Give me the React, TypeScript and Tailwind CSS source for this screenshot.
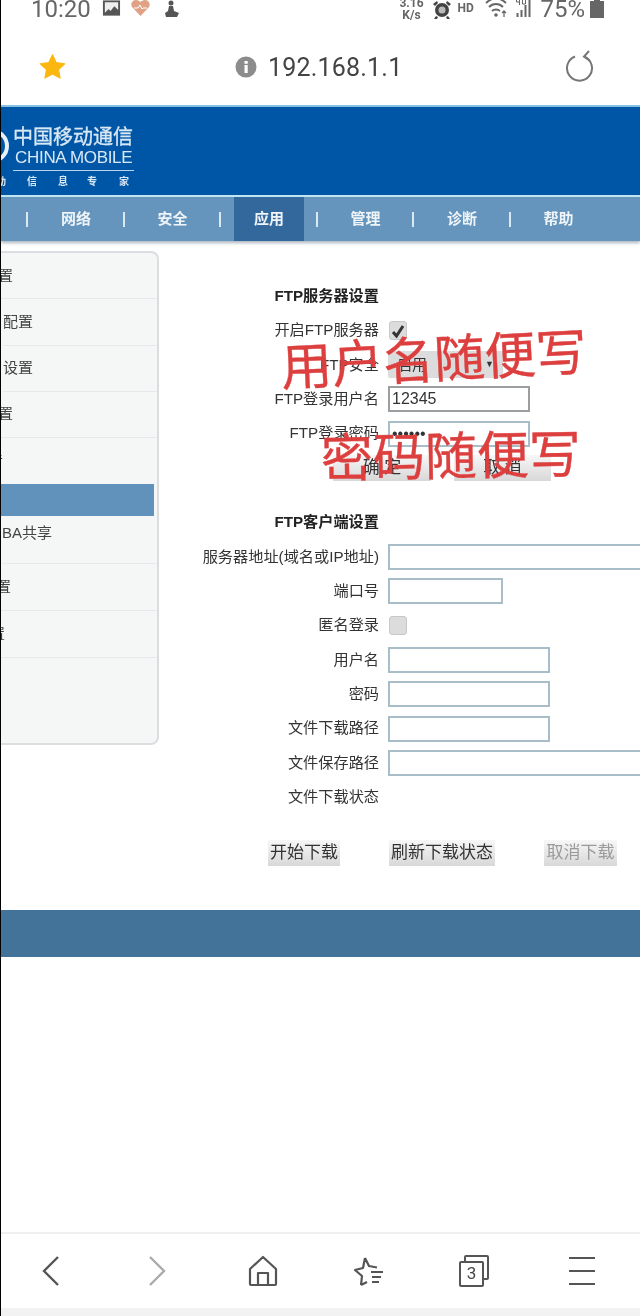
const navItems = ["网络", "安全", "应用", "管理", "诊断", "帮助"];

// only the part of each sidebar label that is still on screen
const sideRows = [
  { label: "置", cls: "h-[46px] ml-[-3px] border-b pt-[1px]" },
  { label: "配置", cls: "h-[47px] ml-[2px] border-b" },
  { label: "设置", cls: "h-[46px] ml-[2px] border-b" },
  { label: "置", cls: "h-[46px] ml-[-3px] border-b" },
  { label: "音", cls: "h-[46px] ml-[-13px]" },
];
const sideRowsBottom = [
  { label: "BA共享", cls: "h-[48px] ml-[1px] border-b pb-[12px]" },
  { label: "置", cls: "h-[47px] ml-[-5px] border-b" },
  { label: "置", cls: "h-[47px] ml-[-11px] border-b" },
];

function Row({ label, children }: { label: string; children?: React.ReactNode }) {
  return (
    <div className="flex h-[34.4px] items-center">
      <div className="w-[220px] shrink-0 whitespace-nowrap text-right text-[15.2px] text-[#333]">{label}</div>
      <div className="ml-[9px] flex items-center">{children}</div>
    </div>
  );
}

function TextBox({ w, value, type = "text", dark }: { w: string; value?: string; type?: string; dark?: boolean }) {
  return (
    <input
      readOnly
      type={type}
      defaultValue={value}
      className={`${w} h-[26px] shrink-0 border-2 ${
        dark ? "border-[#9c9fa1]" : "border-[#a9bdc9]"
      } bg-white px-[2px] text-[16px] text-[#333] outline-none`}
    />
  );
}

function Check({ checked }: { checked?: boolean }) {
  return (
    <div className="ml-[1px] flex h-[19px] w-[18px] items-center justify-center rounded-[3px] border border-[#c8c8c8] bg-[#dcdcdc]">
      {checked && (
        <svg width="14" height="14" viewBox="0 0 14 14">
          <path d="M2 8l3.500 4L12 2" fill="none" stroke="#333" strokeWidth="3" />
        </svg>
      )}
    </div>
  );
}

function Btn({ w, text, muted }: { w: string; text: string; muted?: boolean }) {
  return (
    <div
      className={`${w} flex h-[26px] items-center justify-center whitespace-nowrap bg-gradient-to-b from-[#f7f7f7] to-[#d8d8d8] text-[17px] ${
        muted ? "text-[#9a9a9a]" : "text-[#333]"
      }`}
    >
      {text}
    </div>
  );
}

function StatusBar() {
  return (
    <div className="flex h-[27px] items-start overflow-hidden pl-[30px] text-[#666]">
      <span className="mt-[-5px] font-['Roboto'] text-[24px] leading-[28px]">10:20</span>
      <svg className="ml-[11px]" width="19" height="17" viewBox="0 0 20 17">
        <path d="M1 0h18v16H1z" fill="#555" />
        <path d="M3 2h14v8l-4-4-4 5-2-2-4 4z" fill="#eee" />
      </svg>
      <svg className="ml-[10px]" width="19" height="17" viewBox="0 0 19 17">
        <path d="M9.500 16L1 7C-1 3 2 0 5 0c2 0 3.500 1 4.500 2C10.500 1 12 0 14 0c3 0 6 3 4 7z" fill="#e0a184" />
        <path d="M3 8h4l2-3 2 4 1-1h4" fill="none" stroke="#fff" strokeWidth="1" />
      </svg>
      <svg className="ml-[14px]" width="16" height="18" viewBox="0 0 16 18">
        <circle cx="7" cy="3" r="2.500" fill="#555" />
        <path d="M5 6h4l1 5 5 2-2 4H2l-1-4 3-2z" fill="#555" />
      </svg>
      <div className="ml-auto flex items-start">
        <div className="mt-[-3px] w-[24px] text-center font-['Roboto'] text-[12px] font-bold leading-[12px]">
          3.16
          <br />
          K/s
        </div>
        <svg className="ml-[9px]" width="20" height="20" viewBox="0 0 20 20">
          <circle cx="10" cy="10" r="7" fill="#444" />
          <circle cx="10" cy="10" r="3.500" fill="#bbb" />
          <path d="M1 4l4-3 1 2-3 3zM19 4l-4-3-1 2 3 3zM4 16l-2 3h3l1-2zM16 16l2 3h-3l-1-2z" fill="#444" />
        </svg>
        <span className="ml-[5px] mt-[2px] w-[17px] font-['Roboto'] text-[12px] font-bold leading-[12px]">HD</span>
        <svg className="ml-[11px] mt-[-2px]" width="24" height="20" viewBox="0 0 24 20">
          <path d="M1 5c6-6 14-6 20 0M4 9c4-4 10-4 14 0M7 13c2-2 6-2 8 0" fill="none" stroke="#666" strokeWidth="1.800" />
          <circle cx="11" cy="17" r="1.800" fill="#666" />
          <path d="M19 13v6M17 15l2-2 2 2" fill="none" stroke="#666" strokeWidth="1.300" />
        </svg>
        <svg className="ml-[6px] mt-[-3px]" width="18" height="21" viewBox="0 0 17 21">
          <path d="M1 20h2v-4H1zM5 20h2v-7H5zM9 20h2V8H9zM13 20h2V1h-2z" fill="#666" />
          <path d="M1 1v4h3M4 1v7M7 1h3v6H7z" fill="none" stroke="#666" strokeWidth="1" />
        </svg>
        <span className="ml-[7px] mt-[-5px] font-['Roboto'] text-[24px] leading-[28px]">75%</span>
        <svg className="ml-[5px] mt-[-1px]" width="14" height="19" viewBox="0 0 14 19">
          <path d="M4 0h6v2h4v17H0V2h4z" fill="#666" />
        </svg>
      </div>
      <div className="w-[36px] shrink-0" />
    </div>
  );
}

function UrlBar() {
  return (
    <div className="flex h-[78px] items-center">
      <svg className="ml-[37px] mt-[1px]" width="29" height="28" viewBox="0 0 24 24">
        <path
          d="M12 1.500l3.200 6.800 7.300.9-5.400 5 1.400 7.300L12 18l-6.500 3.500 1.400-7.300-5.400-5 7.300-.9z"
          fill="#fbb710"
          stroke="#fbb710"
          strokeLinejoin="round"
        />
      </svg>
      <svg className="ml-[168px] mt-[1px]" width="22" height="22" viewBox="0 0 22 22">
        <circle cx="11" cy="11" r="10.500" fill="#8c8c8c" />
        <rect x="9.500" y="9" width="3.200" height="8" fill="#fff" />
        <rect x="9.500" y="5" width="3.200" height="2.800" fill="#fff" />
      </svg>
      <span className="ml-[11px] mt-[3px] font-['Roboto'] text-[25px] tracking-[0.2px] text-[#444]">192.168.1.1</span>
      <svg className="ml-[163px]" width="30" height="32" viewBox="0 0 30 32">
        <path d="M10 6.500a12.500 12.500 0 1 0 9 0" fill="none" stroke="#777" strokeWidth="2" />
        <path d="M24 1l-5 5.500 5.500 4" fill="none" stroke="#777" strokeWidth="2" />
      </svg>
    </div>
  );
}

function Banner() {
  return (
    <div className="flex h-[90px] items-start border-t-2 border-[#84c4e2] bg-[#0056a6] text-[#d9e8f5]">
      <svg className="mt-[20px] shrink-0" width="8" height="38" viewBox="0 0 8 38">
        <circle cx="-9" cy="19" r="15" fill="none" stroke="#e8f0f8" strokeWidth="4" />
      </svg>
      <div className="ml-[4px] w-[121px] shrink-0">
        <div className="mt-[18px] whitespace-nowrap text-[20px] leading-[24px] [-webkit-text-stroke:0.3px_#d9e8f5]">中国移动通信</div>
        <div className="ml-[2px] mt-[-1px] whitespace-nowrap text-[17px] font-normal leading-[19px] tracking-[-0.3px]">CHINA MOBILE</div>
        <div className="mt-[3px] h-[1px] bg-[#b8d4ea]" />
      </div>
      <div className="absolute left-[1px] top-[175px] flex w-[135px] text-[10px] font-bold leading-[14px]">
        <span className="ml-[-6px]">动</span>
        <span className="ml-[21px]">信</span>
        <span className="ml-[21px]">息</span>
        <span className="ml-[19px]">专</span>
        <span className="ml-[22px]">家</span>
      </div>
    </div>
  );
}

function Nav() {
  return (
    <div className="flex h-[46px] border-t-2 border-[#bfe4f2] bg-[#6595bd] pl-[25px] shadow-[0_2px_3px_rgba(90,110,130,0.5)]">
      {navItems.map((item) => (
        <div key={item} className="flex w-[96.500px] shrink-0 items-center">
          <div className="h-[15px] w-[2px] bg-[#dbe8f1]" />
          <div
            className={`ml-[13px] flex h-full w-[70px] items-center justify-center text-[15px] font-bold text-[#eef4f8] ${
              item === "应用" ? "bg-[#33689d]" : ""
            }`}
          >
            {item}
          </div>
        </div>
      ))}
    </div>
  );
}

function Sidebar() {
  return (
    <div className="mt-[10px] h-[494px] w-[158px] shrink-0 overflow-hidden rounded-r-[8px] border-y-2 border-r-2 border-[#dcdde0] bg-[#f5f6f6] text-[15px] text-[#444]">
      {sideRows.map((r, i) => (
        <div key={i} className={`${r.cls} flex items-center border-[#e8e9ec] whitespace-nowrap`}>
          {r.label}
        </div>
      ))}
      <div className="mr-[3px] h-[32px] bg-[#6192bc]" />
      {sideRowsBottom.map((r, i) => (
        <div key={i} className={`${r.cls} flex items-center border-[#e8e9ec] whitespace-nowrap`}>
          {r.label}
        </div>
      ))}
    </div>
  );
}

function Toolbar() {
  return (
    <div className="relative flex h-[76px] items-center border-t-2 border-[#efefef]">
      <svg className="ml-[40px]" width="20" height="32" viewBox="0 0 20 32">
        <path d="M17 2L3 16l14 14" fill="none" stroke="#555" strokeWidth="2.400" />
      </svg>
      <svg className="ml-[86px]" width="20" height="32" viewBox="0 0 20 32">
        <path d="M3 2l14 14L3 30" fill="none" stroke="#aaa" strokeWidth="2.400" />
      </svg>
      <svg className="ml-[81px]" width="30" height="32" viewBox="0 0 30 32">
        <path d="M15 2L2 14v15a1 1 0 0 0 1 1h24a1 1 0 0 0 1-1V14zM10 30V18h10v12" fill="none" stroke="#555" strokeWidth="2.200" strokeLinejoin="round" />
      </svg>
      <svg className="ml-[74px]" width="32" height="32" viewBox="0 0 32 32">
        <path d="M13 3l4 8 8 1.500M9 30l1-9-7-6 8-2 2-10M9 30l6-3" fill="none" stroke="#555" strokeWidth="2.200" strokeLinejoin="round" />
        <path d="M19 17h12M20 22h9M20 27h7" stroke="#555" strokeWidth="2" />
      </svg>
      <div className="relative ml-[75px] h-[32px] w-[30px]">
        <div className="absolute right-0 top-0 h-[25px] w-[25px] rounded-[2px] border-2 border-[#555]" />
        <div className="absolute bottom-0 left-0 flex h-[26px] w-[25px] items-center justify-center rounded-[2px] border-2 border-[#555] bg-white font-['Roboto'] text-[17px] text-[#444]">
          3
        </div>
      </div>
      <div className="ml-[80px] flex w-[26px] flex-col gap-[11px]">
        <div className="h-[2px] bg-[#555]" />
        <div className="h-[2px] bg-[#555]" />
        <div className="h-[2px] bg-[#555]" />
      </div>
    </div>
  );
}

export default function App() {
  return (
    <div className="relative flex h-[1316px] w-[640px] flex-col overflow-hidden border-l border-black bg-white font-['Liberation_Sans','Noto_Sans_CJK_SC',sans-serif] blur-[0.4px]">
      <StatusBar />
      <UrlBar />
      <Banner />
      <Nav />

      <div className="flex">
        <Sidebar />
        <div className="pt-[38px]">
          <div className="flex h-[34.4px] items-center">
            <div className="w-[220px] text-right text-[15.2px] font-bold text-[#222]">FTP服务器设置</div>
          </div>
          <Row label="开启FTP服务器">
            <Check checked />
          </Row>
          <Row label="FTP安全">
            <div className="flex h-[27px] w-[115px] items-center justify-between rounded-[2px] bg-[#dcdcdc] px-[9px] text-[15px] text-[#333]">
              <span>启用</span>
              <span className="text-[9px]">▼</span>
            </div>
          </Row>
          <Row label="FTP登录用户名">
            <TextBox w="w-[142px]" value="12345" dark />
          </Row>
          <Row label="FTP登录密码">
            <TextBox w="w-[142px]" type="password" value="123456" />
          </Row>
          <div className="ml-[174px] flex h-[34.4px] items-center gap-[23px]">
            <Btn w="w-[98px]" text="确 定" />
            <Btn w="w-[97px]" text="取 消" />
          </div>

          <div className="mt-[20px] flex h-[34.4px] items-center">
            <div className="w-[220px] text-right text-[15.2px] font-bold text-[#222]">FTP客户端设置</div>
          </div>
          <Row label="服务器地址(域名或IP地址)">
            <TextBox w="w-[262px]" />
          </Row>
          <Row label="端口号">
            <TextBox w="w-[115px]" />
          </Row>
          <Row label="匿名登录">
            <Check />
          </Row>
          <Row label="用户名">
            <TextBox w="w-[162px]" />
          </Row>
          <Row label="密码">
            <TextBox w="w-[162px]" />
          </Row>
          <Row label="文件下载路径">
            <TextBox w="w-[162px]" />
          </Row>
          <Row label="文件保存路径">
            <TextBox w="w-[262px]" />
          </Row>
          <Row label="文件下载状态" />
          <div className="ml-[109px] mt-[25px] flex gap-[49px]">
            <Btn w="w-[72px]" text="开始下载" />
            <Btn w="w-[106px]" text="刷新下载状态" />
            <Btn w="w-[73px]" text="取消下载" muted />
          </div>
        </div>
      </div>

      <div className="mt-[44px] h-[47px] bg-[#447399]" />
      <div className="flex-1" />
      <Toolbar />
      <div className="h-[8px] bg-[#f2f2f2]" />

      {/* red notes written over the screenshot */}
      <div className="absolute left-[280px] top-[329px] -rotate-3 whitespace-nowrap text-[51px] leading-[64px] text-[#dd3f3f] [-webkit-text-stroke:0.4px_#dd3f3f]">
        用户名随便写
      </div>
      <div className="absolute left-[320px] top-[425px] -rotate-1 whitespace-nowrap text-[52px] leading-[64px] text-[#dd3f3f] [-webkit-text-stroke:0.4px_#dd3f3f]">
        密码随便写
      </div>
    </div>
  );
}
